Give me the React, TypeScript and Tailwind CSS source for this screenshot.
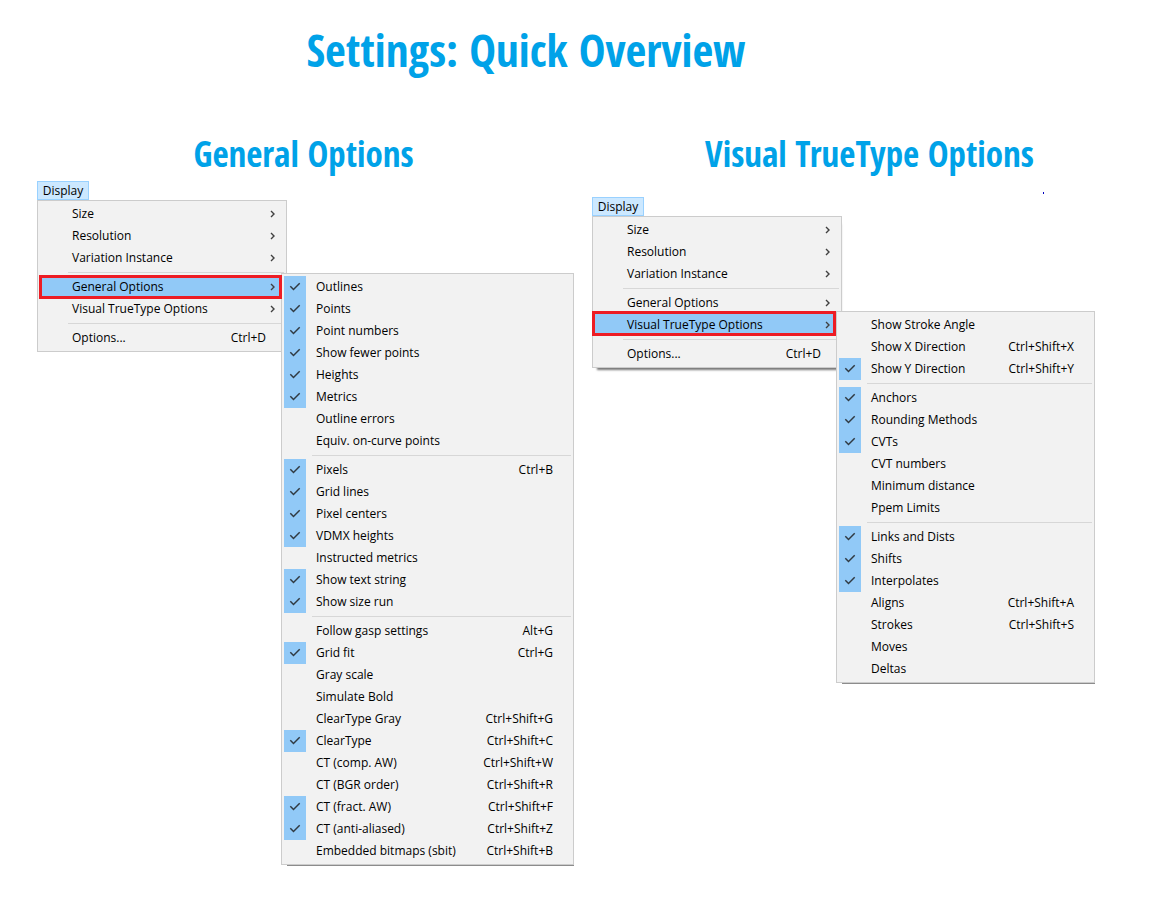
import { Fragment, useId } from "react";

type Entry = { label: string; keys?: string; checked?: boolean };

const generalOptions: Entry[][] = [
  [
    { label: "Outlines", checked: true },
    { label: "Points", checked: true },
    { label: "Point numbers", checked: true },
    { label: "Show fewer points", checked: true },
    { label: "Heights", checked: true },
    { label: "Metrics", checked: true },
    { label: "Outline errors" },
    { label: "Equiv. on-curve points" },
  ],
  [
    { label: "Pixels", keys: "Ctrl+B", checked: true },
    { label: "Grid lines", checked: true },
    { label: "Pixel centers", checked: true },
    { label: "VDMX heights", checked: true },
    { label: "Instructed metrics" },
    { label: "Show text string", checked: true },
    { label: "Show size run", checked: true },
  ],
  [
    { label: "Follow gasp settings", keys: "Alt+G" },
    { label: "Grid fit", keys: "Ctrl+G", checked: true },
    { label: "Gray scale" },
    { label: "Simulate Bold" },
    { label: "ClearType Gray", keys: "Ctrl+Shift+G" },
    { label: "ClearType", keys: "Ctrl+Shift+C", checked: true },
    { label: "CT (comp. AW)", keys: "Ctrl+Shift+W" },
    { label: "CT (BGR order)", keys: "Ctrl+Shift+R" },
    { label: "CT (fract. AW)", keys: "Ctrl+Shift+F", checked: true },
    { label: "CT (anti-aliased)", keys: "Ctrl+Shift+Z", checked: true },
    { label: "Embedded bitmaps (sbit)", keys: "Ctrl+Shift+B" },
  ],
];

const trueTypeOptions: Entry[][] = [
  [
    { label: "Show Stroke Angle" },
    { label: "Show X Direction", keys: "Ctrl+Shift+X" },
    { label: "Show Y Direction", keys: "Ctrl+Shift+Y", checked: true },
  ],
  [
    { label: "Anchors", checked: true },
    { label: "Rounding Methods", checked: true },
    { label: "CVTs", checked: true },
    { label: "CVT numbers" },
    { label: "Minimum distance" },
    { label: "Ppem Limits" },
  ],
  [
    { label: "Links and Dists", checked: true },
    { label: "Shifts", checked: true },
    { label: "Interpolates", checked: true },
    { label: "Aligns", keys: "Ctrl+Shift+A" },
    { label: "Strokes", keys: "Ctrl+Shift+S" },
    { label: "Moves" },
    { label: "Deltas" },
  ],
];

const mainMenu = [
  ["Size", "Resolution", "Variation Instance"],
  ["General Options", "Visual TrueType Options"],
];

function Separator() {
  return (
    <div className="flex h-[7px] items-center pl-7">
      <hr className="w-full border-t border-[#d7d7d7]" />
    </div>
  );
}

function CheckRow({ entry }: { entry: Entry }) {
  const id = useId();
  return (
    <div className="flex h-[22px] items-center pr-[18px]">
      <span className="grid">
        <input
          id={id}
          type="checkbox"
          defaultChecked={entry.checked}
          className="peer col-start-1 row-start-1 size-[22px] appearance-none checked:bg-[#91c9f7]"
        />
        <svg
          viewBox="0 0 22 22"
          className="pointer-events-none invisible col-start-1 row-start-1 size-[22px] peer-checked:visible"
          fill="none"
          stroke="#303a42"
          strokeWidth="1.5"
        >
          <path d="M6.3 10.3l3.2 3.2 6.2-6.2" />
        </svg>
      </span>
      <label htmlFor={id} className="flex flex-1 justify-between pl-[10px]">
        <span>{entry.label}</span>
        {entry.keys && <kbd className="font-[inherit]">{entry.keys}</kbd>}
      </label>
    </div>
  );
}

function SubMenu({ groups, width }: { groups: Entry[][]; width: string }) {
  return (
    <div
      className={`absolute -top-[3px] left-full -ml-[3px] border border-[#cccccc] bg-[#f2f2f2] p-[2px] shadow-[3px_4px_0_-3px_#8c8c8c] ${width}`}
    >
      {groups.map((group, i) => (
        <Fragment key={i}>
          {i > 0 && <Separator />}
          {group.map((entry) => (
            <CheckRow key={entry.label} entry={entry} />
          ))}
        </Fragment>
      ))}
    </div>
  );
}

type MenuProps = {
  open: string;
  groups: Entry[][];
  subWidth: string;
  markClass: string;
  shadow?: string;
};

function DisplayMenu({ open, groups, subWidth, markClass, shadow = "" }: MenuProps) {
  return (
    <div className="w-[250px] font-['Open_Sans','Noto_Sans',sans-serif] text-xs text-black">
      <button className="flex h-[19px] w-[52px] items-center justify-center border border-[#99d1ff] bg-[#cce8ff]">
        Display
      </button>
      <div className={`border border-[#cccccc] bg-[#f2f2f2] p-[2px] ${shadow}`}>
        {mainMenu.map((items, i) => (
          <Fragment key={i}>
            {items.map((item) => (
              <div key={item} className="relative">
                <button
                  className={`flex h-[22px] w-full items-center justify-between pr-2 pl-8 ${item === open ? "bg-[#91c9f7]" : ""}`}
                >
                  <span>{item}</span>
                  <svg viewBox="0 0 7 9" className="h-[9px] w-[7px]" fill="none" stroke="#404040" strokeWidth="1.4">
                    <path d="M2 1l3 3-3 3" />
                  </svg>
                </button>
                {item === open && (
                  <>
                    <SubMenu groups={groups} width={subWidth} />
                    <div className={`pointer-events-none absolute border-3 border-[#ed1c24] ${markClass}`} />
                  </>
                )}
              </div>
            ))}
            <Separator />
          </Fragment>
        ))}
        <button className="flex h-[22px] w-full items-center justify-between pr-[18px] pl-8">
          <span>Options...</span>
          <kbd className="font-[inherit]">Ctrl+D</kbd>
        </button>
      </div>
    </div>
  );
}

export default function App() {
  return (
    <main className="min-h-screen bg-white pt-5 pr-[7px] pl-[37px]">
      <h1 className="pr-[132px] text-center font-['Open_Sans_Condensed','Open_Sans',sans-serif] text-[45px] leading-[60px] font-bold text-[#00a2e8]">
        Settings: Quick Overview
      </h1>
      <div className="grid grid-cols-2 pt-[52px]">
        <section>
          <h2 className="pr-[22px] text-center font-['Open_Sans_Condensed','Open_Sans',sans-serif] text-[35px] leading-[44px] font-bold text-[#00a2e8]">
            General Options
          </h2>
          <div className="pt-[5px]">
            <DisplayMenu
              open="General Options"
              groups={generalOptions}
              subWidth="w-[293px]"
              markClass="-top-px right-[2px] -bottom-px -left-px"
            />
          </div>
        </section>
        <section>
          <h2 className="text-center font-['Open_Sans_Condensed','Open_Sans',sans-serif] text-[35px] leading-[44px] font-bold text-[#00a2e8]">
            Visual TrueType Options
          </h2>
          <div className="relative pt-[21px]">
            <span className="absolute top-4 left-[451px] h-[2px] w-px bg-[#0000c0]" />
            <DisplayMenu
              open="Visual TrueType Options"
              groups={trueTypeOptions}
              subWidth="w-[259px]"
              markClass="-top-[3px] right-[3px] bottom-0 -left-[3px]"
              shadow="shadow-[2px_5px_2px_-3px_#777777]"
            />
          </div>
        </section>
      </div>
    </main>
  );
}
